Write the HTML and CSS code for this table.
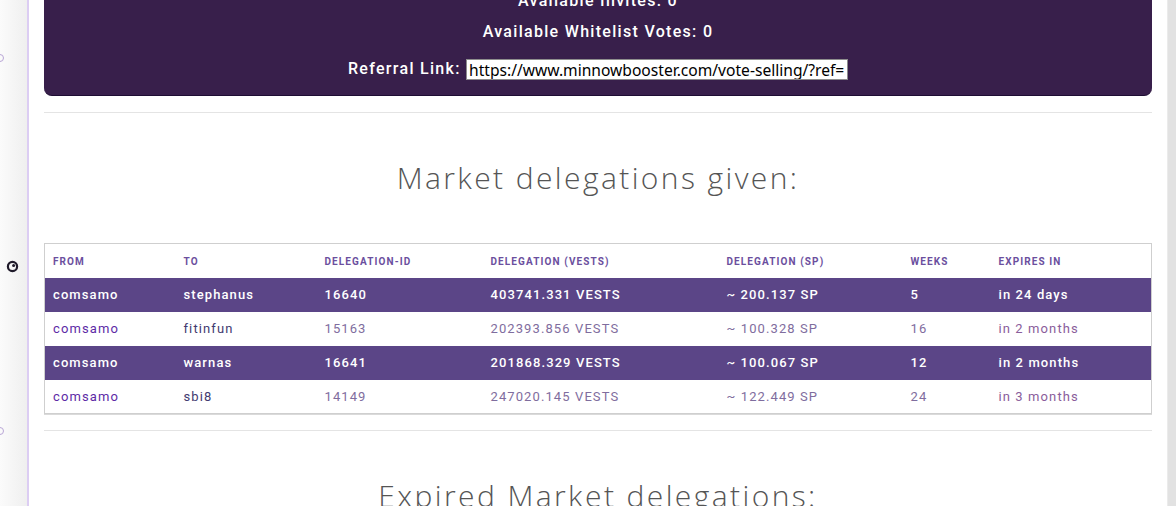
FILE: index.html
```html
<!DOCTYPE html>
<html lang="en">
<head>
    <meta charset="UTF-8">
    <title>Vote Selling</title>
    <link rel="stylesheet" href="styles.css">
</head>
<body>
    <div class="sidebar">
        <span class="dot dot-top"></span>
        <svg class="eye" width="13" height="13" viewBox="0 0 13 13">
            <circle cx="6.5" cy="6.5" r="4.6" fill="none" stroke="#1f1a2a" stroke-width="2.2"/>
            <circle cx="7.6" cy="5.4" r="1.5" fill="#1f1a2a"/>
        </svg>
        <span class="dot dot-bottom"></span>
    </div>

    <div class="main">
        <div class="account">
            <p>Available Invites: 0</p>
            <p>Available Whitelist Votes: 0</p>
            <p class="link">Referral Link: <input class="ref" type="text" value="https://www.minnowbooster.com/vote-selling/?ref=!comsamo" readonly></p>
        </div>

        <hr>

        <h2 class="title">Market delegations given:</h2>

        <table class="list">
            <colgroup>
                <col style="width: 131px">
                <col style="width: 141px">
                <col style="width: 166px">
                <col style="width: 236px">
                <col style="width: 184px">
                <col style="width: 88px">
                <col>
            </colgroup>
            <thead>
                <tr>
                    <th>From</th>
                    <th>To</th>
                    <th>Delegation-ID</th>
                    <th>Delegation (Vests)</th>
                    <th>Delegation (SP)</th>
                    <th>Weeks</th>
                    <th>Expires in</th>
                </tr>
            </thead>
            <tbody>
                <tr class="odd">
                    <td>comsamo</td>
                    <td>stephanus</td>
                    <td>16640</td>
                    <td>403741.331 VESTS</td>
                    <td>~ 200.137 SP</td>
                    <td>5</td>
                    <td>in 24 days</td>
                </tr>
                <tr>
                    <td class="from">comsamo</td>
                    <td class="to">fitinfun</td>
                    <td>15163</td>
                    <td>202393.856 VESTS</td>
                    <td>~ 100.328 SP</td>
                    <td>16</td>
                    <td class="exp">in 2 months</td>
                </tr>
                <tr class="odd">
                    <td>comsamo</td>
                    <td>warnas</td>
                    <td>16641</td>
                    <td>201868.329 VESTS</td>
                    <td>~ 100.067 SP</td>
                    <td>12</td>
                    <td>in 2 months</td>
                </tr>
                <tr>
                    <td class="from">comsamo</td>
                    <td class="to">sbi8</td>
                    <td>14149</td>
                    <td>247020.145 VESTS</td>
                    <td>~ 122.449 SP</td>
                    <td>24</td>
                    <td class="exp">in 3 months</td>
                </tr>
            </tbody>
        </table>

        <hr>

        <h2 class="title">Expired Market delegations:</h2>
    </div>

    <div class="scrollbar"></div>
</body>
</html>
```

FILE: styles.css
```css
* {
    margin: 0;
    padding: 0;
    box-sizing: border-box;
}

body {
    display: flex;
    height: 506px;
    overflow: hidden;
    background-color: #fff;
    font-family: Roboto, "Liberation Sans", sans-serif;
}

/* left rail */
.sidebar {
    width: 29px;
    flex-shrink: 0;
    display: flex;
    flex-direction: column;
    background: linear-gradient(to right, #fbfbfb, #efefef);
    border-right: 2px solid #dccdf3;
}

.dot {
    display: block;
    width: 8px;
    height: 8px;
    margin-left: -4px;
    border: 1.5px solid #b9a6d6;
    border-radius: 50%;
}

.dot-top {
    margin-top: 54px;
}

.eye {
    margin: 198px 0 0 6px;
}

.dot-bottom {
    margin-top: 154px;
}

/* page body */
.main {
    flex: 1;
    min-width: 0;
    padding: 0 15px;
    margin-top: -30px;
}

.account {
    background-color: #381f4b;
    border-bottom: 1px solid #1e0d33;
    border-radius: 0 0 8px 8px;
    padding: 20px 20px 15px;
    text-align: center;
    color: #fff;
}

.account p {
    font-size: 16px;
    font-weight: 500;
    line-height: 22px;
    letter-spacing: 1.3px;
    margin-bottom: 9px;
}

.account p.link {
    margin: 15px 0 0;
}

.ref {
    width: 382px;
    height: 21px;
    padding: 0 2px;
    border: 1px solid #8d8d8d;
    background-color: #fff;
    color: #000;
    font-family: "Noto Sans", "Open Sans", sans-serif;
    font-size: 15.6px;
    font-weight: 400;
    letter-spacing: 0;
    vertical-align: middle;
    outline: none;
}

hr {
    border: 0;
    border-top: 1px solid #e4e4e4;
    margin-top: 16px;
}

.title {
    margin: 47px 0 47px;
    text-align: center;
    font-family: "Open Sans", "Noto Sans", sans-serif;
    font-size: 30px;
    font-weight: 300;
    line-height: 36px;
    letter-spacing: 2.4px;
    color: #555;
}

/* delegations table */
.list {
    width: 100%;
    table-layout: fixed;
    border-collapse: collapse;
    border: 1px solid #cfcfcf;
    box-shadow: 0 1px 0 #dadada;
}

.list th {
    height: 34px;
    padding: 0 8px;
    text-align: left;
    font-size: 10px;
    font-weight: 700;
    letter-spacing: 1.1px;
    text-transform: uppercase;
    color: #6b4f9e;
}

.list td {
    height: 34px;
    padding: 0 8px;
    font-size: 13px;
    letter-spacing: 1.1px;
    white-space: nowrap;
    color: #7f6d9e;
}

.list td.from {
    color: #5d2aa6;
}

.list td.to {
    color: #423a70;
}

.list td.exp {
    color: #8a5d9b;
}

.list tr.odd {
    background-color: #5b4587;
}

.list tr.odd td {
    color: #fff;
    font-weight: 500;
}

/* fake scrollbar track */
.scrollbar {
    width: 9px;
    flex-shrink: 0;
    background-color: #e2e2e2;
    border-left: 1px solid #ebebeb;
}
```
